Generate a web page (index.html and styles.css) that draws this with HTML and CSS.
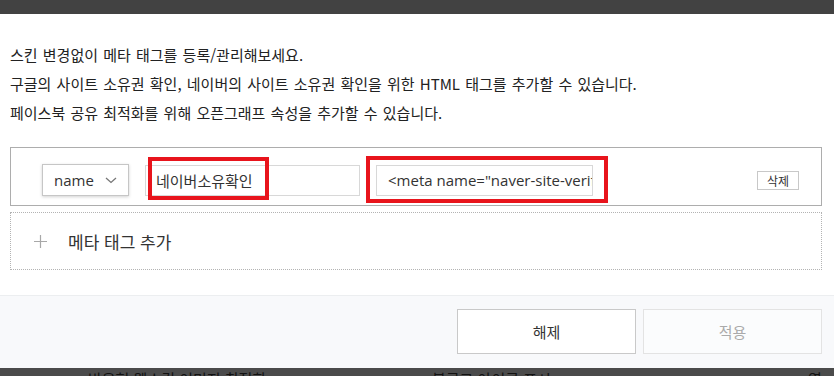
FILE: index.html
```html
<!DOCTYPE html>
<html lang="ko">
<head>
    <meta charset="UTF-8">
    <meta name="viewport" content="width=device-width, initial-scale=1.0">
    <title>메타 태그 등록</title>
    <link rel="stylesheet" href="styles.css">
</head>
<body>
    <div class="dim-top"></div>

    <div class="modal">
        <div class="modal-body">
            <div class="intro">
                <p>스킨 변경없이 메타 태그를 등록/관리해보세요.</p>
                <p>구글의 사이트 소유권 확인, 네이버의 사이트 소유권 확인을 위한 HTML 태그를 추가할 수 있습니다.</p>
                <p>페이스북 공유 최적화를 위해 오픈그래프 속성을 추가할 수 있습니다.</p>
            </div>

            <!-- Meta tag row -->
            <div class="meta-row">
                <div class="type-select">
                    <span>name</span>
                    <svg width="12" height="7" viewBox="0 0 12 7"><path d="M1 1l5 4.5L11 1" fill="none" stroke="#777" stroke-width="1.3"/></svg>
                </div>
                <div class="field field-name">
                    <input type="text" value="네이버소유확인">
                    <span class="highlight hl-name"></span>
                </div>
                <div class="field field-content">
                    <input type="text" value='<meta name="naver-site-verification" content="">'>
                    <span class="highlight hl-content"></span>
                </div>
                <button class="btn-delete">삭제</button>
            </div>

            <!-- Add row -->
            <div class="add-row">
                <svg class="plus" width="13" height="13" viewBox="0 0 13 13"><path d="M6.5 0v13M0 6.5h13" stroke="#a8a8a8" stroke-width="1.2"/></svg>
                <span>메타 태그 추가</span>
            </div>
        </div>

        <div class="modal-footer">
            <button class="btn btn-reset">해제</button>
            <button class="btn btn-apply">적용</button>
        </div>
    </div>

    <div class="dim-bottom">
        <span class="under-a">반응형 웹스킨 이미지 최적화</span>
        <span class="under-b">블로그 아이콘 표시</span>
        <span class="under-c">영어 대</span>
    </div>
</body>
</html>
```
FILE: styles.css
```css
/* General Styles */
body {
    margin: 0;
    width: 834px;
    height: 376px;
    overflow: hidden;
    background: #424242;
    font-family: "Noto Sans CJK KR", "Noto Sans", sans-serif;
    color: #222;
}

.dim-top {
    height: 14px;
    background: #424242;
}

.modal {
    background: #fff;
    height: 354px;
    display: flex;
    flex-direction: column;
}

.modal-body {
    height: 255px;
    padding: 26px 12px 0 10px;
    border-bottom: 1px solid #eceef0;
}

.intro p {
    margin: 0;
    font-size: 15px;
    line-height: 29px;
    word-spacing: 1px;
}

/* Meta tag row */
.meta-row {
    margin-top: 20px;
    height: 50px;
    padding: 7px 0 0 31px;
    border: 1px solid #adadad;
    display: flex;
    align-items: center;
}

.type-select {
    width: 87px;
    height: 32px;
    box-sizing: border-box;
    border: 1px solid #c6c6c6;
    box-shadow: 0 1px 3px rgba(0, 0, 0, 0.18);
    display: flex;
    align-items: center;
    justify-content: space-between;
    padding: 0 11px 0 11px;
    font-family: "Open Sans", "Noto Sans", sans-serif;
    font-size: 15px;
    color: #333;
}

.field {
    position: relative;
    margin-left: 16px;
}

.field input {
    display: block;
    height: 31px;
    box-sizing: border-box;
    border: 1px solid #d8d8d8;
    font-family: "Open Sans", "Noto Sans CJK KR", sans-serif;
    font-size: 15px;
    color: #333;
    outline: none;
    margin: 0;
}

.field-name input {
    width: 215px;
    padding: 0 10px;
}

.field-content input {
    width: 217px;
    padding: 0 0 0 11px;
}

/* Red annotation boxes */
.highlight {
    position: absolute;
    border: 4px solid #e8141c;
    pointer-events: none;
}

.hl-name {
    left: 3px;
    top: -8px;
    width: 113px;
    height: 35px;
}

.hl-content {
    left: -10px;
    top: -9px;
    width: 234px;
    height: 39px;
}

.btn-delete {
    margin: 0 22px 0 auto;
    width: 42px;
    height: 19px;
    padding: 0;
    background: #fff;
    border: 1px solid #c8c8c8;
    font-family: "Noto Sans CJK KR", sans-serif;
    font-size: 12px;
    color: #333;
}

/* Add row */
.add-row {
    margin-top: 6px;
    height: 56px;
    border: 1px dotted #b3b3b3;
    display: flex;
    align-items: center;
    padding-left: 23px;
    font-size: 17px;
    color: #333;
}

.add-row .plus {
    margin-right: 21px;
}

/* Footer */
.modal-footer {
    flex: 1;
    background: #f8f9fb;
    display: flex;
    justify-content: flex-end;
    align-items: flex-start;
    gap: 7px;
    padding: 13px 12px 0 0;
}

.btn {
    width: 179px;
    height: 45px;
    font-family: "Noto Sans CJK KR", sans-serif;
    font-size: 15px;
    background: #fff;
}

.btn-reset {
    border: 1px solid #c9c9c9;
    color: #333;
}

.btn-apply {
    border: 1px solid #e3e3e3;
    background: #fbfcfd;
    color: #aaa;
}

/* Page beneath the dim layer */
.dim-bottom {
    height: 8px;
    background: #4b4b4b;
    position: relative;
    overflow: hidden;
    font-size: 15px;
    color: #111;
}

.dim-bottom span {
    position: absolute;
    top: 1px;
    line-height: 20px;
}

.under-a { left: 88px; }
.under-b { left: 432px; }
.under-c { left: 808px; }
```
